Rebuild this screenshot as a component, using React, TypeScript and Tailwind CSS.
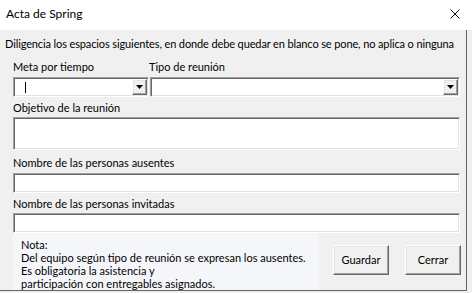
import type { ReactNode } from "react";

const sunken =
  "bg-white border border-t-[#a0a0a0] border-l-[#a0a0a0] border-b-white border-r-white shadow-[inset_1px_1px_0_#696969,inset_-1px_-1px_0_#e3e3e3]";
const raised =
  "bg-[#f0f0f0] border border-t-white border-l-white border-b-[#696969] border-r-[#696969] shadow-[inset_-1px_-1px_0_#a0a0a0,inset_1px_1px_0_#e3e3e3]";

function DropButton() {
  return (
    <div className={`${raised} w-[15px] h-full flex items-center justify-center`}>
      <svg width="7" height="4" viewBox="0 0 7 4">
        <polygon points="0,0 7,0 3.5,4" fill="#000" />
      </svg>
    </div>
  );
}

function Combo({ cursor }: { cursor?: boolean }) {
  return (
    <div className={`${sunken} h-[20px] flex items-stretch p-[1px]`}>
      <div className="flex-1 flex items-center pl-[10px]">
        {cursor && <div className="w-[1px] h-[11px] bg-black" />}
      </div>
      <DropButton />
    </div>
  );
}

function Label({ children, className = "" }: { children: ReactNode; className?: string }) {
  return <div className={`h-[16px] leading-[16px] whitespace-nowrap ${className}`}>{children}</div>;
}

export default function App() {
  return (
    <div className="w-[472px] h-[293px] bg-[#f0f0f0] overflow-hidden text-black text-[11px] font-[Lato,sans-serif]">
      {/* title bar */}
      <div className="h-[30px] bg-white flex justify-between pl-[6px] pr-[12px]">
        <span className="mt-[6px] leading-[16px] text-[12px]">Acta de Spring</span>
        <svg className="mt-[9px]" width="10" height="10" viewBox="0 0 10 10">
          <path d="M0.5 0.5 L9.5 9.5 M9.5 0.5 L0.5 9.5" stroke="#111" strokeWidth="1" />
        </svg>
      </div>

      {/* form body */}
      <div className="w-[467px] h-[261px] border-r border-b border-[#646464] flex flex-col">
        <div className="pt-[6px] pl-[5px] leading-[16px] whitespace-nowrap tracking-[-0.12px]">
          Diligencia los espacios siguientes, en donde debe quedar en blanco se pone, no aplica o ninguna
        </div>

        <div className="pl-[13px] w-[460px] flex flex-col">
          <div className="mt-[7px] grid grid-cols-[136px_310px] gap-x-[1px]">
            <Label>Meta por tiempo</Label>
            <Label className="-ml-[1px]">Tipo de reunión</Label>
            <div className="mt-[2px]">
              <Combo cursor />
            </div>
            <div className="mt-[2px]">
              <Combo />
            </div>
          </div>

          <Label className="mt-[3px]">Objetivo de la reunión</Label>
          <div className={`${sunken} mt-[1px] h-[33px]`} />

          <Label className="mt-[5px]">Nombre de las personas ausentes</Label>
          <div className={`${sunken} mt-[2px] h-[20px]`} />

          <Label className="mt-[3px]">Nombre de las personas invitadas</Label>
          <div className={`${sunken} mt-[1px] h-[20px]`} />
        </div>

        <div className="flex-1 pl-[13px] flex">
          <div className="w-[306px] bg-[#f4f6f9] pl-[8px] pt-[5px] leading-[13px] whitespace-nowrap">
            <div>Nota:</div>
            <div>Del equipo según tipo de reunión se expresan los ausentes.</div>
            <div>Es obligatoria la asistencia y</div>
            <div>participación con entregables asignados.</div>
          </div>
          <div className="ml-[14px] mt-[12px] flex gap-[16px]">
            <button className={`${raised} w-[56px] h-[30px]`}>Guardar</button>
            <button className={`${raised} w-[56px] h-[30px]`}>Cerrar</button>
          </div>
        </div>
      </div>
    </div>
  );
}
